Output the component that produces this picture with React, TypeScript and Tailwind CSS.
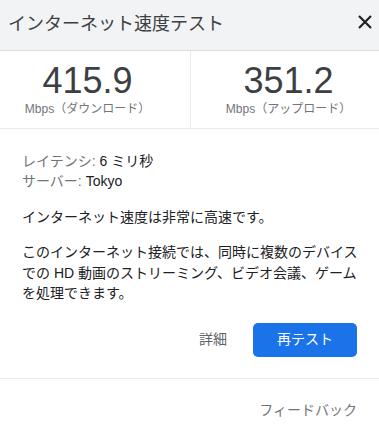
import React from "react";

const font = { fontFamily: '"Liberation Sans", Arial, "Noto Sans CJK JP", sans-serif' };

export default function App() {
  return (
    <div className="w-[379px] h-[439px] bg-white overflow-hidden" style={font}>
      <div className="h-[51px] bg-[#f1f3f4] border-b border-[#dadce0] flex items-center justify-between pl-[8px] pr-[7px]">
        <div className="text-[18px] text-[#3c4043] leading-none mt-[-2px]">インターネット速度テスト</div>
        <svg width="14" height="14" viewBox="0 0 14 14" className="mt-[-6px]">
          <path d="M1 1L13 13M13 1L1 13" stroke="#202124" strokeWidth="2.2" />
        </svg>
      </div>
      <div className="grid grid-cols-[191px_1fr] h-[78px] border-b border-[#e8eaed]">
        <div className="border-r border-[#e8eaed] flex flex-col items-center pr-[15px] pt-[10px]">
          <div className="text-[36px] leading-[40px] text-[#3c4043]">415.9</div>
          <div className="text-[12px] leading-[14px] text-[#70757a] mt-[1px]">Mbps（ダウンロード）</div>
        </div>
        <div className="flex flex-col items-center pl-[7px] pt-[10px]">
          <div className="text-[36px] leading-[40px] text-[#3c4043]">351.2</div>
          <div className="text-[12px] leading-[14px] text-[#70757a] mt-[1px]">Mbps（アップロード）</div>
        </div>
      </div>
      <div className="pl-[22px] pr-[10px] pt-[22px] text-[14px] text-[#202124]">
        <div className="leading-[20px]">
          <div><span className="text-[#70757a]">レイテンシ: </span>6 ミリ秒</div>
          <div><span className="text-[#70757a]">サーバー: </span>Tokyo</div>
        </div>
        <div className="leading-[20px] mt-[16px]">インターネット速度は非常に高速です。</div>
        <div className="leading-[20.5px] mt-[15px] whitespace-nowrap">
          このインターネット接続では、同時に複数のデバイス
          <br />
          での HD 動画のストリーミング、ビデオ会議、ゲーム
          <br />
          を処理できます。
        </div>
      </div>
      <div className="flex items-center justify-end pr-[22px] mt-[19px] gap-[26px]">
        <button className="text-[14px] text-[#5f6368]">詳細</button>
        <button className="w-[104px] h-[34px] rounded-[5px] bg-[#1a73e8] text-white text-[14px]">再テスト</button>
      </div>
      <div className="mt-[21px] border-t border-[#e8eaed]" />
      <div className="flex justify-end pr-[22px] pt-[21px]">
        <span className="text-[14px] text-[#70757a] leading-[20px]">フィードバック</span>
      </div>
    </div>
  );
}
